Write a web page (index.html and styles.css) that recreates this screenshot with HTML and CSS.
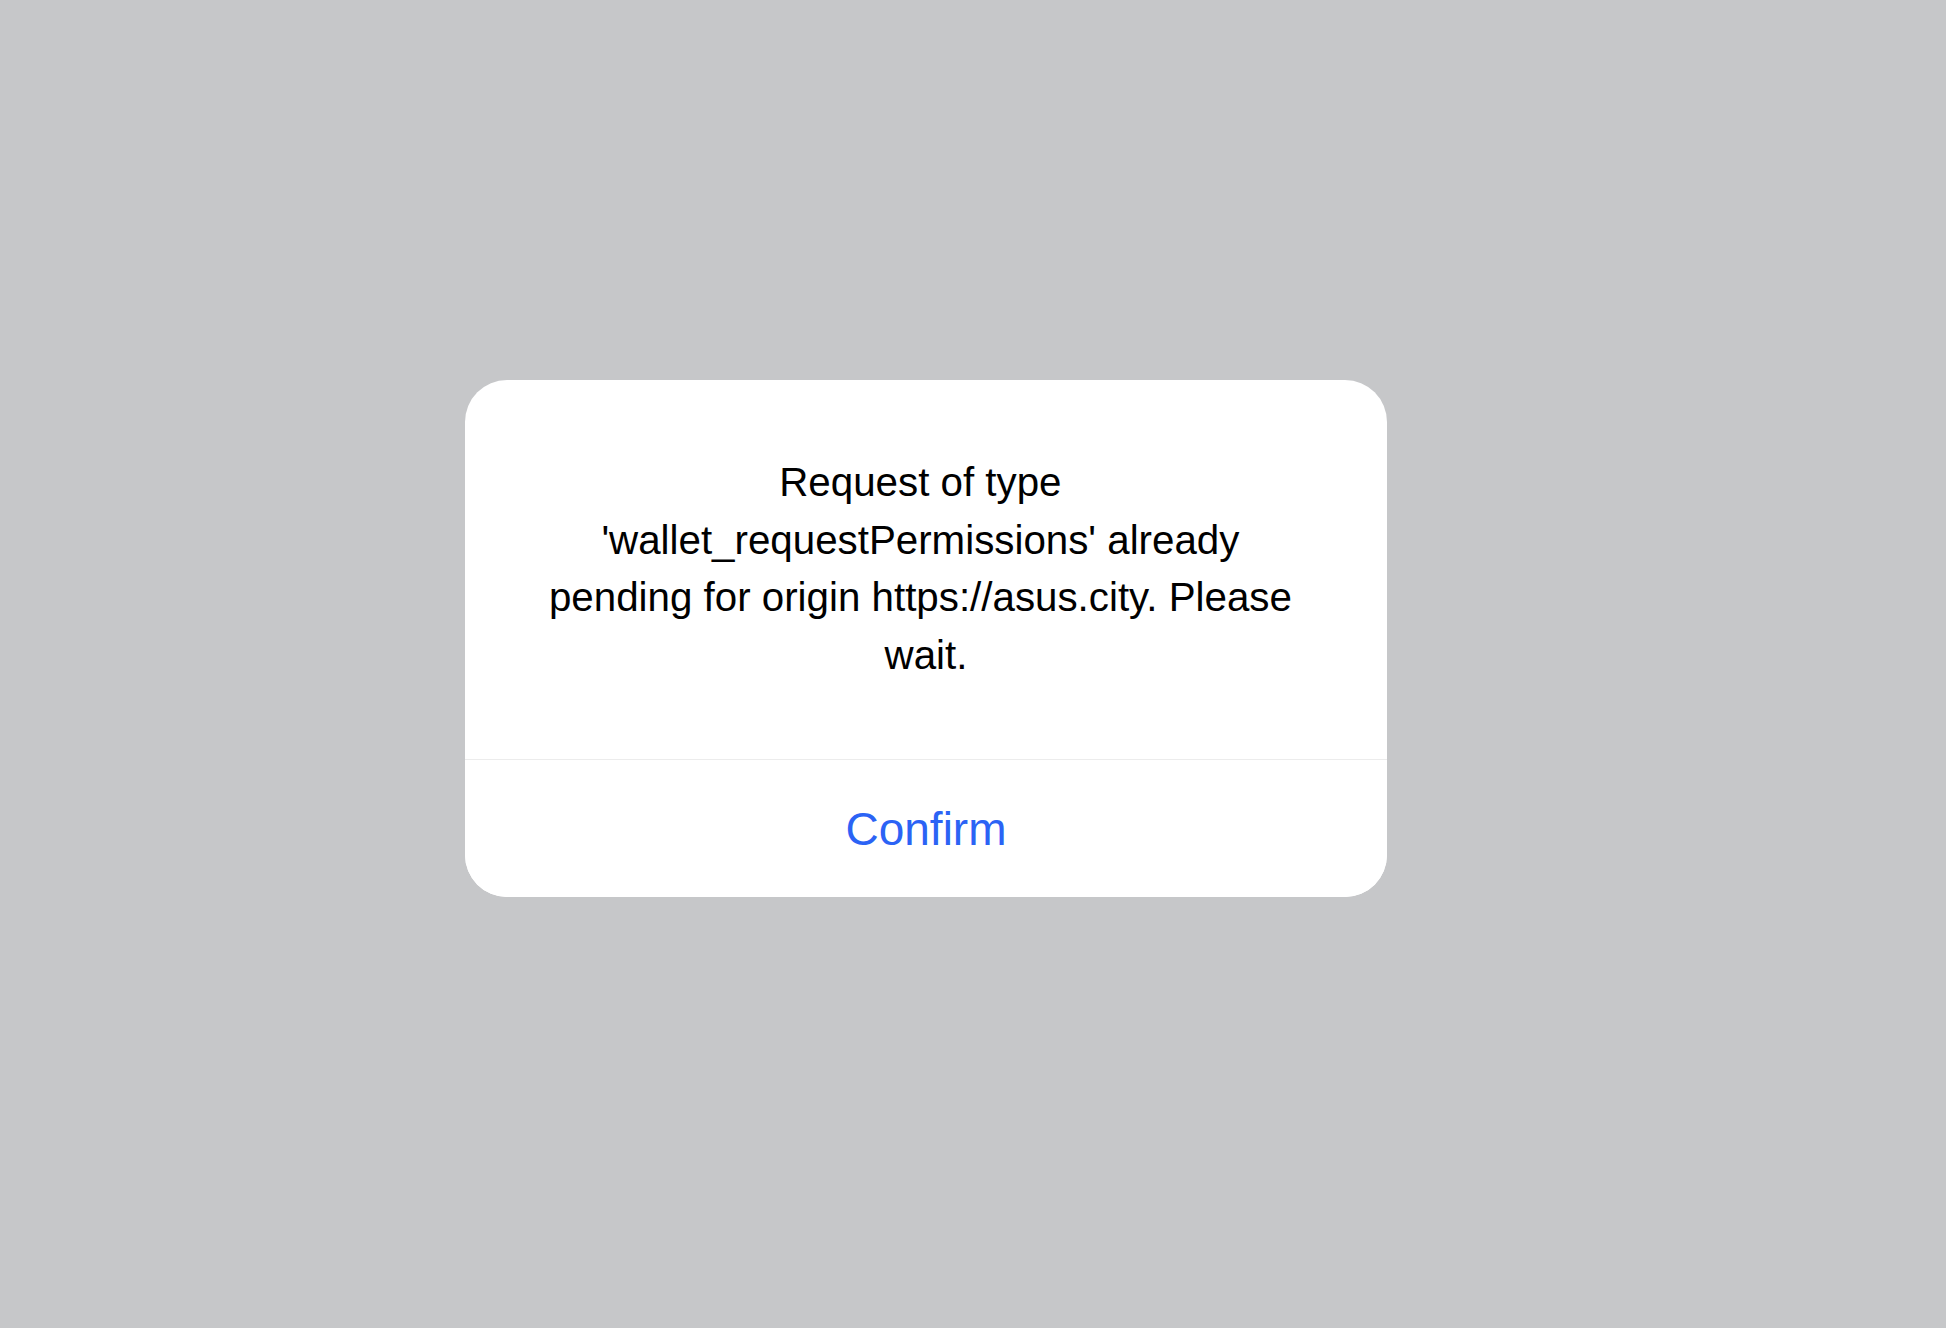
FILE: index.html
```html
<!DOCTYPE html>
<html lang="en">
<head>
    <meta charset="UTF-8">
    <meta name="viewport" content="width=device-width, initial-scale=1.0">
    <title>Notice</title>
    <link rel="stylesheet" href="styles.css">
</head>
<body>
    <div class="overlay">
        <div class="dialog">
            <div class="dialog-body">
                Request of type&nbsp;<br>
                'wallet_requestPermissions' already&nbsp;<br>
                pending for origin https://asus.city. Please&nbsp;<br>
                wait.
            </div>
            <button class="dialog-btn">Confirm</button>
        </div>
    </div>
</body>
</html>
```

FILE: styles.css
```css
* {
    margin: 0;
    padding: 0;
    box-sizing: border-box;
}

body {
    font-family: 'Liberation Sans', Arial, sans-serif;
    background: #c6c7c9;
    height: 100vh;
    overflow: hidden;
}

.overlay {
    padding: 380px 0 0 465px;
}

.dialog {
    width: 922px;
    background: white;
    border-radius: 42px;
    overflow: hidden;
}

.dialog-body {
    height: 380px;
    padding: 74px 40px 0;
    text-align: center;
    font-size: 40.3px;
    line-height: 57.5px;
    color: #000;
    white-space: nowrap;
    border-bottom: 1px solid #ececec;
}

.dialog-btn {
    display: block;
    width: 100%;
    height: 137px;
    border: none;
    background: white;
    color: #2b63f5;
    font-family: inherit;
    font-size: 46px;
    cursor: pointer;
}
```
